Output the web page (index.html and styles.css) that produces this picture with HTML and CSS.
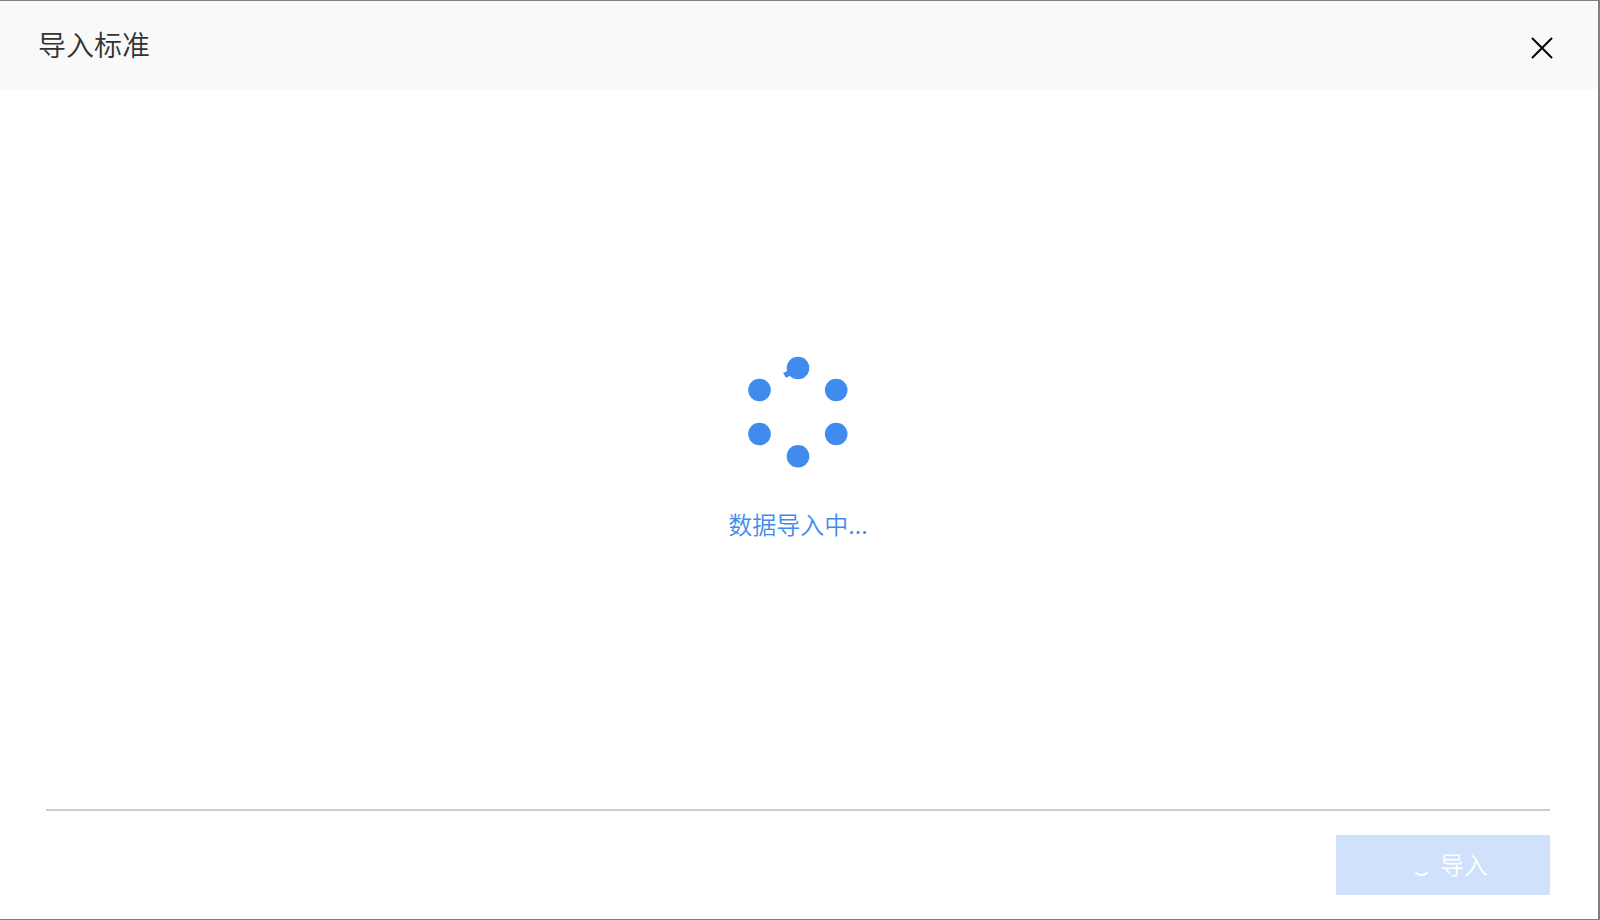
FILE: index.html
```
<!DOCTYPE html>
<html lang="zh-CN">
<head>
  <meta charset="UTF-8">
  <meta name="viewport" content="width=device-width, initial-scale=1">
  <title>导入标准</title>
  <link rel="stylesheet" href="styles.css">
</head>
<body>

<div class="dialog" role="dialog" aria-labelledby="dialog-title">
  <header class="dialog-header">
    <h1 id="dialog-title">导入标准</h1>
    <button type="button" class="close-button" aria-label="关闭">
      <svg width="24" height="24" viewBox="0 0 24 24">
        <path d="M2.5 2.5 21.5 21.5M21.5 2.5 2.5 21.5" fill="none" stroke="#000" stroke-width="2" stroke-linecap="round"/>
      </svg>
    </button>
  </header>

  <main class="dialog-body">
    <div class="loading" role="status">
      <svg class="loading-dots" width="120" height="120" viewBox="0 0 120 120">
        <circle cx="60" cy="16" r="11.3"/>
        <circle cx="98.2" cy="38" r="11.3"/>
        <circle cx="98.2" cy="82" r="11.3"/>
        <circle cx="60" cy="104.3" r="11.3"/>
        <circle cx="21.5" cy="82" r="11.3"/>
        <circle cx="21.5" cy="38" r="11.3"/>
        <path d="M45.2 21 50 18.6 54 23 47.8 25.8Z"/>
      </svg>
      <p>数据导入中...</p>
    </div>
  </main>

  <footer class="dialog-footer">
    <button type="button" class="import-button" disabled>
      <svg width="24" height="24" viewBox="0 0 24 24">
        <path d="M6 20Q11.5 24 17 20" fill="none" stroke="#fff" stroke-width="1.8" stroke-linecap="round"/>
      </svg>
      <span>导入</span>
    </button>
  </footer>
</div>

</body>
</html>
```
FILE: styles.css
```
* {
  box-sizing: border-box;
}
body {
  margin: 0;
  font-family: "Noto Sans CJK SC", sans-serif;
  font-weight: 350;
  background: #fff;
  color: #333;
}
button {
  font-family: inherit;
  font-weight: inherit;
  border: none;
  padding: 0;
}
svg {
  display: block;
}
.dialog {
  display: flex;
  flex-direction: column;
  min-height: 100vh;
  border: solid #808080;
  border-width: 1px 2px 1px 0;
}
.dialog-header {
  display: flex;
  align-items: center;
  justify-content: space-between;
  height: 88px;
  padding: 0 44px 0 38px;
  background: #f9f9f9;
}
.dialog-header h1 {
  margin: 0;
  padding-bottom: 2px;
  font-size: 28px;
  font-weight: inherit;
  line-height: 40px;
}
.close-button {
  padding-top: 6px;
  background: none;
  cursor: pointer;
}
.dialog-body {
  display: flex;
  flex: 1;
  flex-direction: column;
  align-items: center;
  justify-content: center;
  margin: 0 48px 0 46px;
  padding-bottom: 4px;
  border-bottom: 2px solid #ccc;
}
.loading {
  display: flex;
  flex-direction: column;
  align-items: center;
  color: #428bee;
}
.loading-dots {
  fill: #428bee;
}
.loading p {
  margin: 34px 0 0;
  font-size: 24px;
  line-height: 36px;
}
.dialog-footer {
  display: flex;
  justify-content: flex-end;
  padding: 24px 48px 24px 46px;
}
.import-button {
  display: flex;
  align-items: center;
  justify-content: center;
  gap: 6px;
  width: 214px;
  height: 60px;
  padding-left: 12px;
  background: #d0e1fb;
  color: #fff;
  font-size: 24px;
}
.import-button span {
  padding-bottom: 4px;
}
```
